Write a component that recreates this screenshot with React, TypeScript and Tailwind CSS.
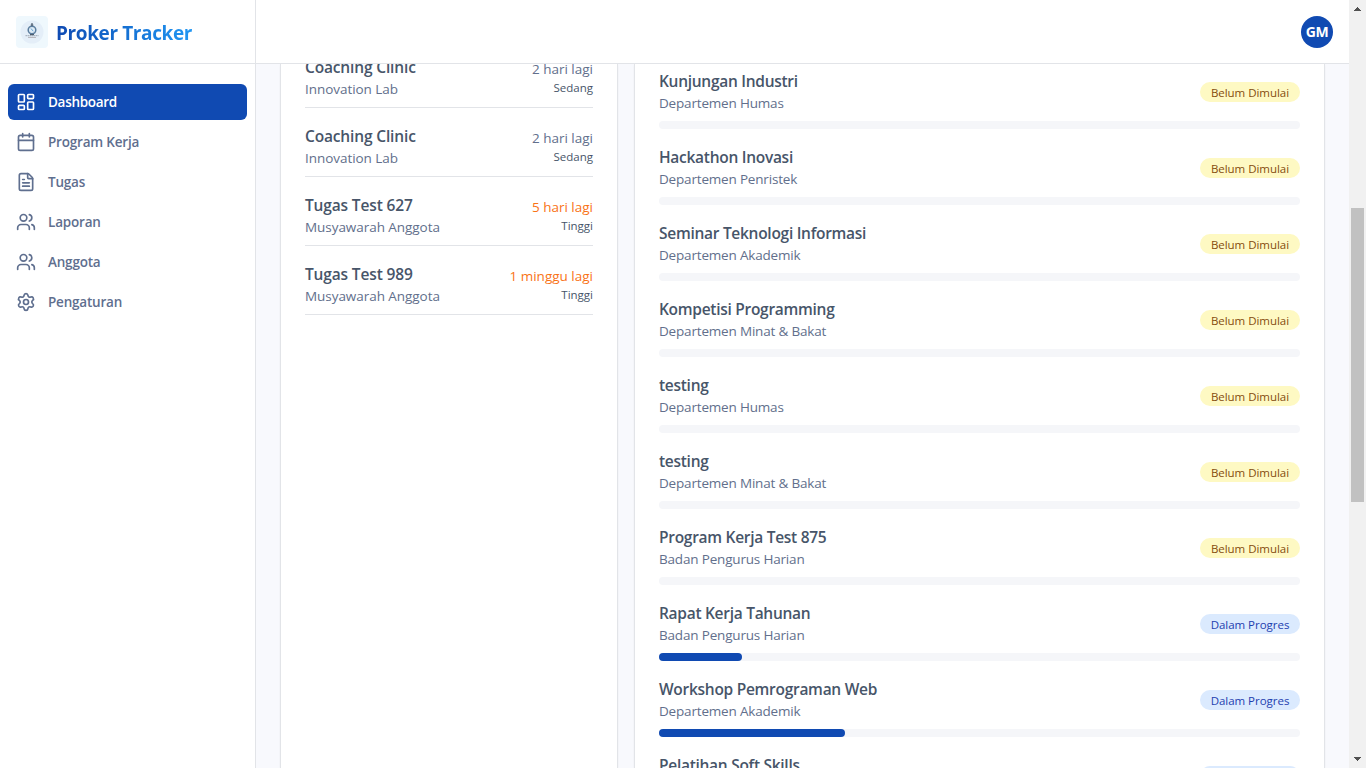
import { Calendar, FileText, LayoutDashboard, Settings, Users } from "lucide-react";
import type { LucideIcon } from "lucide-react";

const menu: { label: string; icon: LucideIcon; active?: boolean }[] = [
  { label: "Dashboard", icon: LayoutDashboard, active: true },
  { label: "Program Kerja", icon: Calendar },
  { label: "Tugas", icon: FileText },
  { label: "Laporan", icon: Users },
  { label: "Anggota", icon: Users },
  { label: "Pengaturan", icon: Settings },
];

const tasks = [
  { title: "Coaching Clinic", team: "Innovation Lab", due: "2 hari lagi", priority: "Sedang", soon: false },
  { title: "Coaching Clinic", team: "Innovation Lab", due: "2 hari lagi", priority: "Sedang", soon: false },
  { title: "Tugas Test 627", team: "Musyawarah Anggota", due: "5 hari lagi", priority: "Tinggi", soon: true },
  { title: "Tugas Test 989", team: "Musyawarah Anggota", due: "1 minggu lagi", priority: "Tinggi", soon: true },
];

const programs = [
  { title: "Kunjungan Industri", team: "Departemen Humas", progress: 0, started: false },
  { title: "Hackathon Inovasi", team: "Departemen Penristek", progress: 0, started: false },
  { title: "Seminar Teknologi Informasi", team: "Departemen Akademik", progress: 0, started: false },
  { title: "Kompetisi Programming", team: "Departemen Minat & Bakat", progress: 0, started: false },
  { title: "testing", team: "Departemen Humas", progress: 0, started: false },
  { title: "testing", team: "Departemen Minat & Bakat", progress: 0, started: false },
  { title: "Program Kerja Test 875", team: "Badan Pengurus Harian", progress: 0, started: false },
  { title: "Rapat Kerja Tahunan", team: "Badan Pengurus Harian", progress: 13, started: true },
  { title: "Workshop Pemrograman Web", team: "Departemen Akademik", progress: 29, started: true },
  { title: "Pelatihan Soft Skills", team: "Departemen Akademik", progress: 40, started: true },
];

function Logo() {
  return (
    <svg viewBox="0 0 32 32" className="size-8 shrink-0">
      <rect width="32" height="32" rx="4" fill="#eff8fd" />
      <circle cx="16" cy="16" r="11.5" fill="#e4eef8" />
      <circle cx="16" cy="14" r="3.8" fill="#dceaf5" stroke="#5b7d9e" strokeWidth="1.5" />
      <path d="M15 12.5l2.2 2.7" stroke="#6aa5d8" strokeWidth="1" />
      <path d="M16 7v3M14.7 9h2.6M14 18.7h4" stroke="#4c5d70" strokeWidth="1.2" />
      <path d="M9.5 19.7h13" stroke="#8a96a3" strokeWidth="0.8" strokeDasharray="1.5 .5" />
      <path d="M12 21.4h8" stroke="#a9a5a9" strokeWidth="0.8" />
    </svg>
  );
}

function Sidebar() {
  return (
    <aside className="flex w-64 shrink-0 flex-col border-r border-[#e2e4e8] bg-white">
      <div className="flex h-16 shrink-0 items-center gap-2 border-b border-[#e2e4e8] px-4">
        <Logo />
        <span className="bg-linear-to-r from-[#104ab2] to-[#2196f3] bg-clip-text pt-0.5 text-[19px] leading-7 font-bold tracking-[-0.38px] whitespace-nowrap text-transparent">
          Proker Tracker
        </span>
      </div>
      <nav className="flex flex-col gap-1 px-2 pt-5">
        {menu.map(({ label, icon: Icon, active }) => (
          <a
            key={label}
            className={
              active
                ? "flex h-9 items-center gap-3 rounded-md bg-[#104ab2] px-2 text-[13.5px] font-semibold tracking-[-0.3px] text-white"
                : "flex h-9 items-center gap-3 rounded-md px-2 text-[13.5px] font-semibold tracking-[-0.2px] text-[#5f6f8f]"
            }
          >
            <Icon className="size-5" strokeWidth={2} />
            {label}
          </a>
        ))}
      </nav>
    </aside>
  );
}

function Tasks() {
  return (
    <section className="w-[338px] shrink-0 border-x border-[#e2e4e8] bg-white px-6 shadow-[0_1px_2px_rgba(0,0,0,0.05)]">
      <div className="-mt-[25px] flex flex-col">
        {tasks.map((t, i) => (
          <div key={i} className="flex h-[69px] justify-between border-b border-[#e2e4e8]">
            <div className="pt-4">
              <h3 className="text-[15.5px] leading-6 font-semibold tracking-[-0.15px] text-[#475569]">{t.title}</h3>
              <p className="text-[13.5px] leading-5 tracking-[-0.05px] text-[#626f8c]">{t.team}</p>
            </div>
            <div className="pt-5 text-right">
              <p
                className={
                  t.soon
                    ? "text-[13.5px] leading-5 text-[#f97316]"
                    : "text-[13.5px] leading-5 text-[#626f8c]"
                }
              >
                {t.due}
              </p>
              <p className="pt-px text-[11.5px] leading-4 text-[#475569]">{t.priority}</p>
            </div>
          </div>
        ))}
      </div>
    </section>
  );
}

function Programs() {
  return (
    <section className="min-w-0 flex-1 border-x border-[#e2e4e8] bg-white px-6 shadow-[0_1px_2px_rgba(0,0,0,0.05)]">
      <div className="flex flex-col gap-4 pt-[5px]">
        {programs.map((p, i) => (
          <div key={i} className="flex h-[60px] flex-col justify-between">
            <div className="flex items-start justify-between">
              <div>
                <h3 className="text-[15.5px] leading-6 font-semibold tracking-[-0.28px] text-[#475569]">{p.title}</h3>
                <p className="text-[13.5px] leading-5 tracking-[-0.18px] text-[#626f8c]">{p.team}</p>
              </div>
              <span
                className={
                  p.started
                    ? "mt-[13px] flex h-5 w-[100px] items-center justify-center rounded-full bg-[#dbeafe] pt-px text-[11.5px] font-medium tracking-[-0.03px] text-[#1e40af]"
                    : "mt-[13px] flex h-5 w-[100px] items-center justify-center rounded-full bg-[#fef9c3] pt-px text-[11.5px] font-medium tracking-[-0.03px] text-[#854d0e]"
                }
              >
                {p.started ? "Dalam Progres" : "Belum Dimulai"}
              </span>
            </div>
            <div className="h-2 rounded-full bg-[#f5f6f9]">
              {p.progress > 0 && (
                <div className="h-2 rounded-full bg-[#104ab2]" style={{ width: `${p.progress}%` }} />
              )}
            </div>
          </div>
        ))}
      </div>
    </section>
  );
}

function Scrollbar() {
  return (
    <div className="flex w-[17px] shrink-0 flex-col items-center bg-[#f1f1f1]">
      <svg viewBox="0 0 17 17" className="size-[17px]" shapeRendering="crispEdges">
        <path d="M5 11L8.5 7L12 11z" fill="#505050" />
      </svg>
      <div className="mt-[191px] h-[294px] w-[13px] bg-[#c1c1c1]" />
      <svg viewBox="0 0 17 17" className="mt-auto size-[17px]" shapeRendering="crispEdges">
        <path d="M5 6L8.5 10L12 6z" fill="#505050" />
      </svg>
    </div>
  );
}

export default function App() {
  return (
    <div className="flex h-screen w-full overflow-hidden bg-[#f8f9fd] font-['Open_Sans','Noto_Sans',sans-serif]">
      <Sidebar />
      <div className="flex min-w-0 flex-1 flex-col">
        <header className="flex h-16 shrink-0 items-center justify-end border-b border-[#e2e4e8] bg-white px-4">
          <div className="flex size-8 items-center justify-center rounded-full bg-[#104ab2] text-sm font-bold tracking-[-0.4px] text-white">
            GM
          </div>
        </header>
        <main className="flex min-h-0 flex-1 gap-4 overflow-hidden px-6">
          <Tasks />
          <Programs />
        </main>
      </div>
      <Scrollbar />
    </div>
  );
}
